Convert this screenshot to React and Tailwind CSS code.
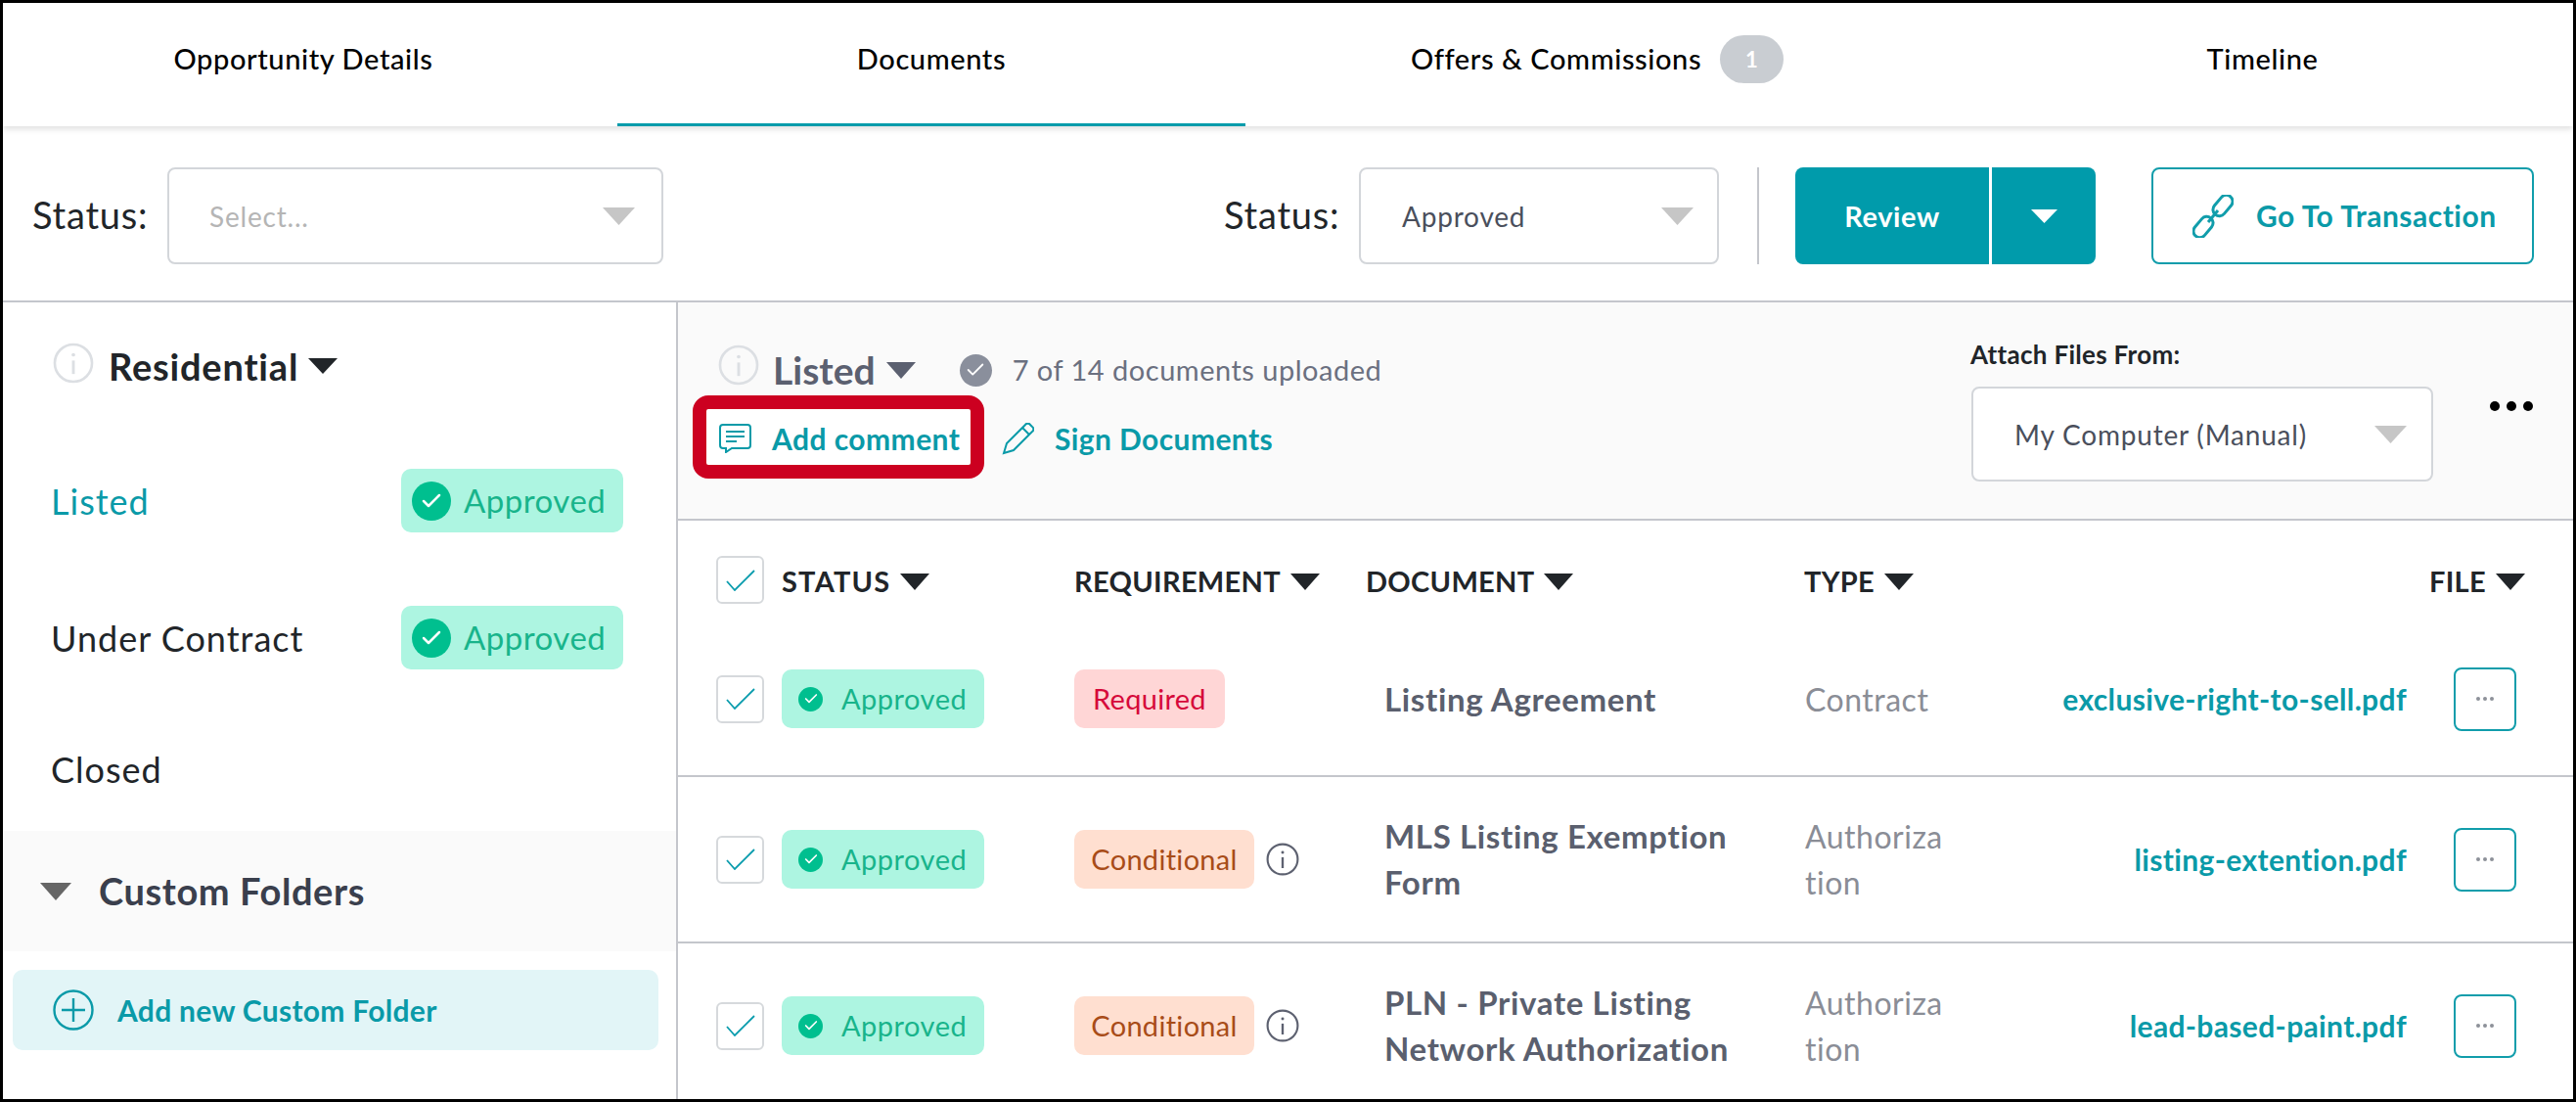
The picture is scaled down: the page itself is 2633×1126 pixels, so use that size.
import { Check } from "lucide-react";

function Caret({ className }) {
  return (
    <svg viewBox="0 0 30 17" preserveAspectRatio="none" className={className}>
      <polygon points="0,0 30,0 15,17" />
    </svg>
  );
}

function InfoIcon({ className }) {
  return (
    <svg viewBox="0 0 32 32" fill="none" stroke="currentColor" className={className}>
      <circle cx="16" cy="16" r="14.5" strokeWidth="2" />
      <circle cx="16" cy="9.5" r="1.4" fill="currentColor" stroke="none" />
      <path d="M16 14v10.5" strokeWidth="2.2" />
    </svg>
  );
}

function Select({ className, text, muted }) {
  return (
    <div className={"flex items-center justify-between bg-white rounded-lg border-2 border-[#d3d6da] " + className}>
      <span className={"text-[28px] tracking-[0.8px] " + (muted ? "text-[#b5b5b5]" : "text-[#4a4f5c]")}>{text}</span>
      <Caret className="w-[33px] h-[18px] fill-[#c6c6c6]" />
    </div>
  );
}

function Checkbox() {
  return (
    <div className="w-[49px] h-[49px] shrink-0 flex items-center justify-center bg-white rounded-md border-2 border-[#d6d9dc]">
      <svg viewBox="0 0 30 22" fill="none" className="w-[30px] h-[22px] stroke-[#0a9cad]" strokeWidth="1.8">
        <path d="M1 12l8 9L29 1" />
      </svg>
    </div>
  );
}

function ApprovedIcon({ className, checkClass }) {
  return (
    <div className={"rounded-full bg-[#00bf8f] flex items-center justify-center shrink-0 " + className}>
      <Check className={"text-white " + checkClass} strokeWidth={2.5} />
    </div>
  );
}

function SideRow({ label, labelClass, approved, rowClass }) {
  return (
    <div className={"flex items-center h-[65px] pl-[49px] " + rowClass}>
      <span className={"w-[358px] text-[36px] tracking-[1px] " + labelClass}>{label}</span>
      {approved && (
        <div className="w-[227px] h-[65px] rounded-[10px] bg-[#adf5e1] flex items-center pl-[11px]">
          <ApprovedIcon className="w-[40px] h-[40px]" checkClass="w-[24px] h-[24px]" />
          <span className="ml-[13px] text-[33px] text-[#18b48b] tracking-[0.5px]">Approved</span>
        </div>
      )}
    </div>
  );
}

function HeadCell({ label, className, labelClass = "tracking-[0.3px]" }) {
  return (
    <div className={"flex items-center shrink-0 " + className}>
      <span className={"text-[29px] font-bold text-[#212529] " + labelClass}>{label}</span>
      <Caret className="ml-[10px] w-[30px] h-[17px] fill-[#212529]" />
    </div>
  );
}

const rows = [
  {
    height: "h-[158px] border-b-[2px] border-[#c4c6cc]",
    req: "Required",
    reqClass: "w-[154px] bg-[#ffd6d6] text-[#d6093a]",
    doc: ["Listing Agreement"],
    type: "Contract",
    file: "exclusive-right-to-sell.pdf",
  },
  {
    height: "h-[170px] border-b-[2px] border-[#c4c6cc]",
    req: "Conditional",
    reqClass: "w-[184px] bg-[#ffdfd0] text-[#a84c18]",
    info: true,
    doc: ["MLS Listing Exemption", "Form"],
    type: "Authorization",
    file: "listing-extention.pdf",
  },
  {
    height: "h-[168px]",
    req: "Conditional",
    reqClass: "w-[184px] bg-[#ffdfd0] text-[#a84c18]",
    info: true,
    doc: ["PLN - Private Listing", "Network Authorization"],
    type: "Authorization",
    file: "lead-based-paint.pdf",
  },
];

function DocRow({ row }) {
  return (
    <div className={"flex items-center shrink-0 pl-[39px] " + row.height}>
      <Checkbox />
      <div className="ml-[18px] w-[207px] h-[60px] rounded-[10px] bg-[#adf5e1] flex items-center pl-[17px] shrink-0">
        <ApprovedIcon className="w-[25px] h-[25px]" checkClass="w-[16px] h-[16px]" />
        <span className="ml-[19px] text-[29px] text-[#18b48b] tracking-[0.5px]">Approved</span>
      </div>
      <div className="ml-[92px] w-[317px] flex items-center shrink-0">
        <div className={"h-[60px] rounded-[10px] flex items-center justify-center text-[29px] tracking-[0.3px] " + row.reqClass}>
          {row.req}
        </div>
        {row.info && <InfoIcon className="ml-[12px] w-[34px] h-[34px] text-[#5d6170]" />}
      </div>
      <div className="w-[430px] shrink-0 text-[33px] leading-[47px] font-bold text-[#5a5f6e] tracking-[0.65px]">
        {row.doc.map((line) => (
          <div key={line}>{line}</div>
        ))}
      </div>
      <div className="w-[150px] shrink-0 text-[32px] leading-[47px] text-[#8a8d96] break-all tracking-[0.5px]">{row.type}</div>
      <div className="flex-1 text-right text-[30px] font-bold text-[#0a9aa8] tracking-[0.35px]">{row.file}</div>
      <div className="ml-[48px] mr-[58px] w-[64px] h-[65px] shrink-0 flex items-center justify-center gap-[3px] bg-white rounded-lg border-2 border-[#119dab]">
        <span className="w-[4px] h-[4px] rounded-full bg-[#8d9199]" />
        <span className="w-[4px] h-[4px] rounded-full bg-[#8d9199]" />
        <span className="w-[4px] h-[4px] rounded-full bg-[#8d9199]" />
      </div>
    </div>
  );
}

export default function App() {
  return (
    <div className="w-[2633px] h-[1126px] overflow-hidden flex flex-col bg-white border-[3px] border-black font-['Lato',sans-serif]">
      <div className="flex h-[126px] shrink-0 shadow-[0_3px_6px_rgba(0,0,0,0.12)] relative">
        <div className="w-[628px] pr-[14px] pb-[12px] flex items-center justify-center text-[29px] font-medium text-black tracking-[0.6px]">Opportunity Details</div>
        <div className="w-[642px] pb-[9px] flex items-center justify-center text-[29px] font-medium text-black tracking-[0.6px] border-b-[3px] border-[#009bab]">Documents</div>
        <div className="w-[719px] pb-[12px] flex items-center justify-center text-[29px] font-medium text-black tracking-[0.6px]">
          Offers &amp; Commissions
          <span className="ml-[19px] w-[65px] h-[49px] rounded-full bg-[#c9cdd2] text-white text-[22px] font-bold flex items-center justify-center">1</span>
        </div>
        <div className="flex-1 pb-[12px] pl-[3px] flex items-center justify-center text-[29px] font-medium text-black tracking-[0.6px]">Timeline</div>
      </div>

      <div className="flex items-start h-[180px] shrink-0 pt-[42px] pl-[30px] pr-[40px] border-b-[2px] border-[#c4c6cc]">
        <div className="w-[118px] h-[99px] pb-[2px] flex items-center text-[38px] text-[#212529] tracking-[0.8px]">Status:</div>
        <Select className="ml-[20px] w-[507px] h-[99px] pl-[41px] pr-[27px]" text="Select..." muted />
        <div className="ml-auto w-[118px] h-[99px] pb-[2px] flex items-center text-[38px] text-[#212529] tracking-[0.8px]">Status:</div>
        <Select className="ml-[20px] w-[368px] h-[99px] pl-[42px] pr-[24px]" text="Approved" />
        <div className="ml-[39px] w-[2px] h-[99px] bg-[#c4c6cc]" />
        <div className="ml-[37px] w-[307px] h-[99px] rounded-lg bg-[#009bab] flex overflow-hidden">
          <div className="w-[198px] flex items-center justify-center text-white text-[29px] font-bold tracking-[0.6px]">Review</div>
          <div className="w-[3px] bg-white" />
          <div className="flex-1 flex items-center justify-center">
            <Caret className="w-[27px] h-[14px] fill-white" />
          </div>
        </div>
        <div className="ml-[57px] w-[391px] h-[99px] rounded-lg border-2 border-[#119dab] flex items-center pl-[40px]">
          <svg viewBox="0 0 42 44" fill="none" className="w-[42px] h-[44px] stroke-[#119dab]" strokeWidth="3">
            <rect x="24.5" y="-1" width="13" height="24" rx="6.5" transform="rotate(40 31 11)" />
            <rect x="4.5" y="21" width="13" height="24" rx="6.5" transform="rotate(40 11 33)" />
            <path d="M16 28l10-12" />
          </svg>
          <span className="ml-[23px] text-[30px] font-bold text-[#0a9aa8] tracking-[0.5px]">Go To Transaction</span>
        </div>
      </div>

      <div className="flex flex-1 min-h-0">
        <div className="w-[690px] shrink-0 border-r-[2px] border-[#c4c6cc] flex flex-col">
          <div className="flex items-center h-[42px] mt-[41px] pl-[51px]">
            <InfoIcon className="w-[42px] h-[42px] text-[#dcdfe3]" />
            <span className="ml-[15px] pt-[6px] text-[38px] font-bold text-[#212529] tracking-[0.8px]">Residential</span>
            <Caret className="ml-[10px] mt-[6px] w-[30px] h-[16px] fill-[#212529]" />
          </div>
          <SideRow label="Listed" labelClass="text-[#0a9aa8]" approved rowClass="mt-[87px]" />
          <SideRow label="Under Contract" labelClass="text-[#212529]" approved rowClass="mt-[75px]" />
          <SideRow label="Closed" labelClass="text-[#212529]" rowClass="mt-[69px]" />
          <div className="mt-[31px] h-[123px] shrink-0 bg-[#fafafa] flex items-center pl-[38px]">
            <Caret className="w-[32px] h-[18px] fill-[#666666]" />
            <span className="ml-[28px] text-[38px] font-bold text-[#3a3f4d] tracking-[0.6px]">Custom Folders</span>
          </div>
          <div className="mt-[19px] ml-[10px] w-[660px] h-[82px] shrink-0 rounded-[10px] bg-[#e2f5f7] flex items-center pl-[41px]">
            <svg viewBox="0 0 42 42" fill="none" className="w-[42px] h-[42px] stroke-[#0a9aa8]" strokeWidth="2.4">
              <circle cx="21" cy="21" r="19.5" />
              <path d="M21 9v24M9 21h24" />
            </svg>
            <span className="ml-[24px] text-[30px] font-bold text-[#0a9aa8] tracking-[0.3px]">Add new Custom Folder</span>
          </div>
        </div>

        <div className="flex-1 min-w-0 flex flex-col">
          <div className="h-[223px] shrink-0 flex bg-[#fafafa] border-b-[2px] border-[#c4c6cc]">
            <div className="pl-[15px] pt-[48px]">
              <div className="flex items-center h-[42px] pl-[25px]">
                <InfoIcon className="-mt-[10px] w-[44px] h-[42px] text-[#dcdfe3]" />
                <span className="ml-[13px] text-[39px] font-bold text-[#5b6070]">Listed</span>
                <Caret className="ml-[11px] w-[30px] h-[17px] fill-[#5b6070]" />
                <div className="ml-[45px] w-[33px] h-[33px] rounded-full bg-[#8a8f9c] flex items-center justify-center">
                  <Check className="w-[22px] h-[22px] text-white" strokeWidth={2} />
                </div>
                <span className="ml-[21px] text-[29px] text-[#6b7080] tracking-[0.5px]">7 of 14 documents uploaded</span>
              </div>
              <div className="mt-[5px] flex items-center">
                <div className="w-[298px] h-[85px] rounded-[16px] border-[14px] border-[#cc0020] bg-white flex items-center pl-[13px]">
                  <svg viewBox="0 0 33 30" fill="none" className="mt-[3px] w-[33px] h-[30px] stroke-[#0a9aa8]" strokeWidth="2">
                    <path d="M4 1h25a3 3 0 0 1 3 3v18a3 3 0 0 1-3 3H13l-6 4v-4H4a3 3 0 0 1-3-3V4a3 3 0 0 1 3-3z" />
                    <path d="M7 8h19M7 13h19M7 18h11" />
                  </svg>
                  <span className="ml-[21px] pt-[3px] text-[30px] font-bold text-[#0a9aa8] tracking-[0.45px] whitespace-nowrap">Add comment</span>
                </div>
                <svg viewBox="0 0 33 33" fill="none" className="ml-[18px] mt-[3px] w-[33px] h-[33px] stroke-[#0a9aa8]" strokeWidth="2">
                  <path d="M2 31l3-10L24 2a3 3 0 0 1 5 0l2 2a3 3 0 0 1 0 5L12 28z" />
                  <path d="M21 5l7 7" />
                </svg>
                <span className="ml-[21px] pt-[3px] text-[30px] font-bold text-[#0a9aa8] tracking-[0.4px]">Sign Documents</span>
              </div>
            </div>
            <div className="ml-auto pt-[38px] w-[472px] shrink-0">
              <div className="text-[26px] leading-[30px] font-bold text-[#212529] tracking-[0.3px] -ml-[1px]">Attach Files From:</div>
              <Select className="mt-[18px] w-[472px] h-[97px] pl-[42px] pr-[25px]" text="My Computer (Manual)" />
            </div>
            <div className="ml-[58px] mr-[41px] mt-[101px] flex gap-[7px] h-[10px] shrink-0">
              <span className="w-[10px] h-[10px] rounded-full bg-black" />
              <span className="w-[10px] h-[10px] rounded-full bg-black" />
              <span className="w-[10px] h-[10px] rounded-full bg-black" />
            </div>
          </div>

          <div className="h-[104px] shrink-0 flex items-start pt-[36px] pl-[39px]">
            <Checkbox />
            <div className="flex items-center h-[49px] pt-[3px]">
              <HeadCell label="STATUS" labelClass="tracking-[1.2px]" className="ml-[18px] w-[299px]" />
              <HeadCell label="REQUIREMENT" className="w-[298px]" />
              <HeadCell label="DOCUMENT" className="w-[448px]" />
              <HeadCell label="TYPE" className="w-[639px]" />
              <HeadCell label="FILE" />
            </div>
          </div>

          {rows.map((row, i) => (
            <DocRow key={i} row={row} />
          ))}
        </div>
      </div>
    </div>
  );
}
